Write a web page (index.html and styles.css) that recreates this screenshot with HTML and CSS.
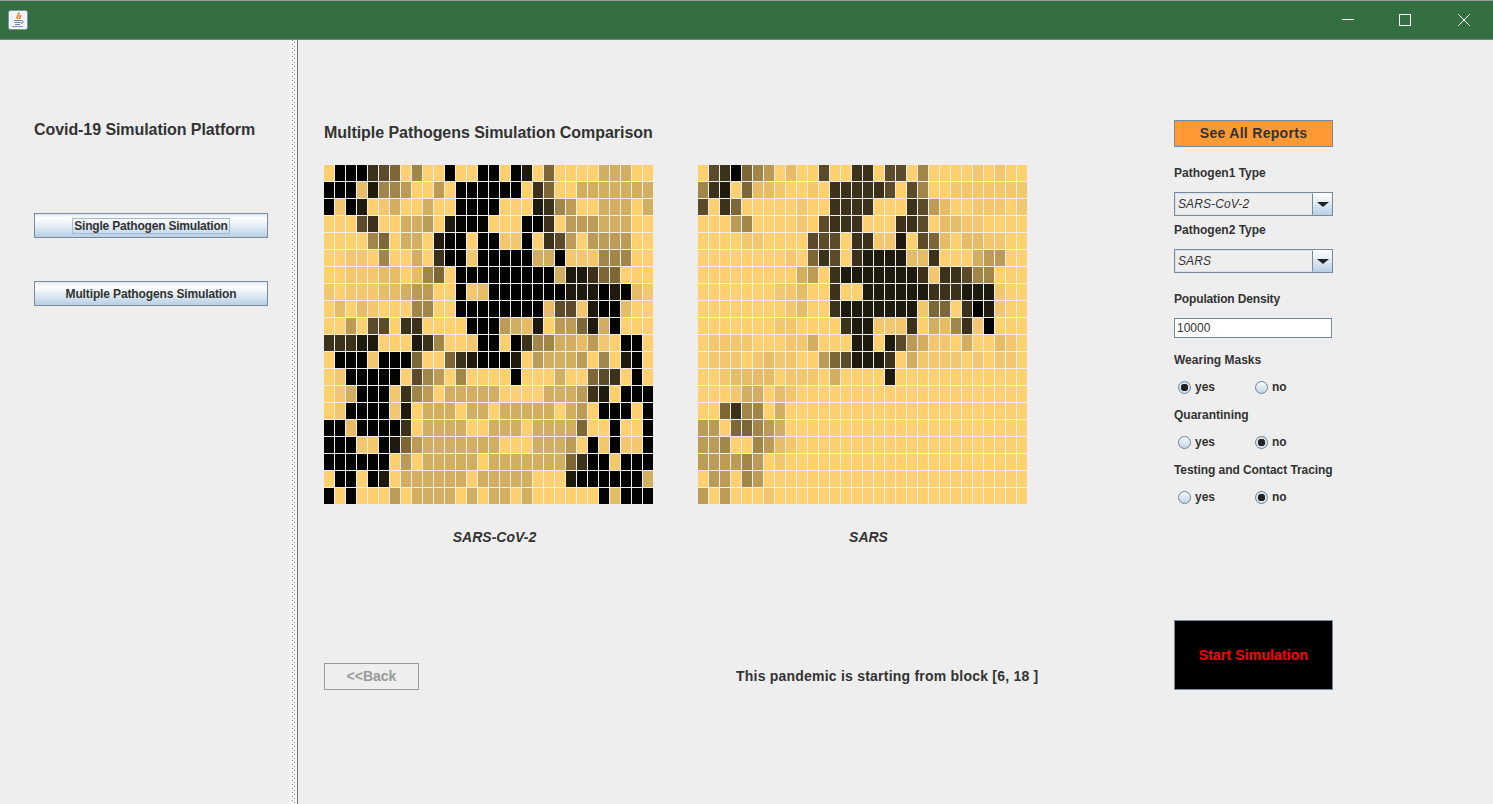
FILE: index.html
```html
<!DOCTYPE html>
<html lang="en">

<head>
    <meta charset="utf-8" />
    <title>Covid-19 Simulation Platform</title>
    <link rel="stylesheet" href="styles.css">
</head>

<body>
    <header class="titlebar">
        <svg class="app-icon" width="20" height="20" viewBox="0 0 20 20">
            <rect x="0.5" y="0.5" width="19" height="19" rx="2" fill="#f1f3f5" stroke="#7f93a8" />
            <path d="M10.500 2.500c1.500 2-2.500 3-1 6.500M12.500 5c.5 1.500-1.500 2-.8 4" fill="none" stroke="#ea7f2e" stroke-width="1.800" />
            <path d="M6 10.500h7.500M6.500 12.500h6.500M7 14.500h5" stroke="#6d8498" fill="none" />
            <path d="M4 16.500h11" stroke="#8298ab" fill="none" />
            <path d="M13.500 10.500c2.500 0 2 3-.5 3" stroke="#6d8498" fill="none" />
        </svg>
        <div class="window-controls">
            <span class="window-btn">
                <svg width="14" height="14" viewBox="0 0 14 14"><path d="M1 6.500h12" stroke="#fff" fill="none" /></svg>
            </span>
            <span class="window-btn">
                <svg width="14" height="14" viewBox="0 0 14 14"><rect x="0.500" y="1.500" width="11" height="11" stroke="#fff" fill="none" /></svg>
            </span>
            <span class="window-btn">
                <svg width="14" height="14" viewBox="0 0 14 14"><path d="M1 1l12 12M13 1L1 13" stroke="#fff" fill="none" /></svg>
            </span>
        </div>
    </header>

    <div class="workspace">
        <nav class="menu-pane">
            <h2 class="platform-title">Covid-19 Simulation Platform</h2>
            <button class="metal-btn single-btn"><span class="focus-ring">Single Pathogen Simulation</span></button>
            <button class="metal-btn multi-btn">Multiple Pathogens Simulation</button>
        </nav>

        <div class="split-divider"></div>

        <main class="sim-pane">
            <section class="compare">
                <h1 class="compare-title">Multiple Pathogens Simulation Comparison</h1>
                <div class="maps">
                    <figure class="map-block">
                        <div class="cell-grid" id="gridA"></div>
                        <figcaption>SARS-CoV-2</figcaption>
                    </figure>
                    <figure class="map-block">
                        <div class="cell-grid" id="gridB"></div>
                        <figcaption>SARS</figcaption>
                    </figure>
                </div>
                <div class="status-row">
                    <button class="back-btn" disabled>&lt;&lt;Back</button>
                    <p class="status-text">This pandemic is starting from block [6, 18 ]</p>
                </div>
            </section>

            <aside class="controls">
                <button class="reports-btn">See All Reports</button>

                <p class="field-label first-label">Pathogen1 Type</p>
                <div class="combo">
                    <span class="combo-value">SARS-CoV-2</span>
                    <span class="combo-arrow"></span>
                </div>

                <p class="field-label tight-label">Pathogen2 Type</p>
                <div class="combo">
                    <span class="combo-value">SARS</span>
                    <span class="combo-arrow"></span>
                </div>

                <p class="field-label density-label">Population Density</p>
                <input class="density-input" type="text" value="10000" />

                <p class="field-label masks-label">Wearing Masks</p>
                <div class="radio-row">
                    <label class="radio-item"><input type="radio" name="masks" checked /> yes</label>
                    <label class="radio-item"><input type="radio" name="masks" /> no</label>
                </div>

                <p class="field-label radio-label">Quarantining</p>
                <div class="radio-row">
                    <label class="radio-item"><input type="radio" name="quarantine" /> yes</label>
                    <label class="radio-item"><input type="radio" name="quarantine" checked /> no</label>
                </div>

                <p class="field-label radio-label tracing-label">Testing and Contact Tracing</p>
                <div class="radio-row">
                    <label class="radio-item"><input type="radio" name="tracing" /> yes</label>
                    <label class="radio-item"><input type="radio" name="tracing" checked /> no</label>
                </div>

                <button class="start-btn">Start Simulation</button>
            </aside>
        </main>
    </div>

    <script src="grid.js"></script>
</body>

</html>
```

FILE: styles.css
```css
* {
    box-sizing: border-box;
}

html,
body {
    height: 100%;
}

body {
    margin: 0;
    display: flex;
    flex-direction: column;
    overflow: hidden;
    font-family: "Liberation Sans", Arial, sans-serif;
    font-weight: 700;
    background: #eeeeee;
    color: #333333;
}

p,
h1,
h2,
figure {
    margin: 0;
}

/* window title bar */
.titlebar {
    flex: none;
    height: 40px;
    display: flex;
    align-items: center;
    justify-content: space-between;
    padding-left: 8px;
    background: #336f42;
    border-top: 1px solid #9a9a9a;
    border-bottom: 1px solid #70877a;
}

.app-icon {
    display: block;
}

.window-controls {
    display: flex;
}

.window-btn {
    width: 58px;
    height: 38px;
    display: flex;
    align-items: center;
    justify-content: center;
}

.workspace {
    flex: 1;
    display: flex;
    min-height: 0;
}

/* left menu */
.menu-pane {
    flex: none;
    width: 289px;
    padding: 80px 0 0 34px;
}

.platform-title {
    font-size: 16px;
    line-height: 20px;
    letter-spacing: -0.07px;
    white-space: nowrap;
}

.metal-btn {
    display: flex;
    align-items: center;
    justify-content: center;
    width: 234px;
    height: 25px;
    padding: 0;
    font: inherit;
    font-size: 12px;
    letter-spacing: -0.13px;
    color: #333333;
    border: 1px solid #7a8a99;
    background: linear-gradient(#dde8f3 0%, #ffffff 18%, #eaf1f8 45%, #b8cfe5 100%);
}

.single-btn {
    margin-top: 73px;
    letter-spacing: -0.2px;
}

.multi-btn {
    margin-top: 43px;
}

.focus-ring {
    border: 1px solid #a3b8cc;
    padding: 0 1px;
    line-height: 14px;
}

/* splitter with the small grip dots */
.split-divider {
    flex: none;
    width: 9px;
    border-right: 1px solid #6f7479;
    background-color: #f6f6f6;
    background-image:
        linear-gradient(#8f9498 1px, transparent 1px),
        linear-gradient(#8f9498 1px, transparent 1px);
    background-size: 1px 4px;
    background-position: 3px 0, 5px 2px;
    background-repeat: repeat-y;
}

.sim-pane {
    flex: 1;
    display: flex;
    padding-left: 26px;
}

.compare {
    flex: none;
    width: 850px;
    padding-top: 83px;
}

.compare-title {
    font-size: 16px;
    line-height: 20px;
    letter-spacing: -0.05px;
}

.maps {
    display: flex;
    gap: 45px;
    margin-top: 22px;
}

.map-block figcaption {
    margin-top: 25px;
    padding-left: 12px;
    font-size: 14px;
    line-height: 16px;
    font-style: italic;
    text-align: center;
}

.cell-grid {
    display: grid;
    grid-template-columns: repeat(30, 10px);
    grid-auto-rows: 16px;
    gap: 1px;
}

/* infection levels, light to dark */
.l0 { background: #ffd070; }
.l1 { background: #f3c76d; }
.l2 { background: #e6bc66; }
.l3 { background: #d2ae60; }
.l4 { background: #bc9b56; }
.l5 { background: #a08648; }
.l6 { background: #7d6736; }
.l7 { background: #5c4b2a; }
.l8 { background: #3c311a; }
.l9 { background: #1f1a0e; }
.la { background: #030302; }

.status-row {
    display: flex;
    align-items: center;
    margin-top: 118px;
}

.back-btn {
    width: 95px;
    height: 27px;
    padding: 0 0 2px;
    font: inherit;
    font-size: 14px;
    color: #999999;
    background: #eeeeee;
    border: 1px solid #999999;
}

.status-text {
    margin: 0 0 2px 317px;
    font-size: 14px;
    letter-spacing: 0.22px;
    white-space: nowrap;
}

/* right column */
.controls {
    flex: none;
    width: 159px;
    padding-top: 80px;
    font-size: 12px;
}

.reports-btn {
    display: block;
    width: 100%;
    height: 27px;
    padding: 0 0 2px;
    font: inherit;
    font-size: 14px;
    letter-spacing: 0.3px;
    color: #333333;
    background: #ff9933;
    border: 1px solid #7a8a99;
}

.field-label {
    line-height: 14px;
    white-space: nowrap;
}

.first-label {
    margin-top: 19px;
}

.tight-label {
    margin-top: 7px;
}

.density-label {
    margin-top: 19px;
    letter-spacing: -0.15px;
}

.masks-label {
    margin-top: 15px;
}

.radio-label {
    margin-top: 13px;
}

.tracing-label {
    letter-spacing: -0.07px;
}

.combo {
    display: flex;
    height: 24px;
    margin-top: 12px;
    border: 1px solid #7a8a99;
    font-weight: 400;
    font-style: italic;
    font-size: 12px;
    letter-spacing: 0.1px;
}

.combo-value {
    flex: 1;
    line-height: 21px;
    padding-left: 2px;
    border: 1px solid #d8e2ec;
    border-right: 1px solid #7a8a99;
}

.combo-arrow {
    flex: none;
    width: 19px;
    display: flex;
    align-items: center;
    justify-content: center;
    background: linear-gradient(#ffffff 0%, #e6eef6 40%, #b8cfe5 100%);
}

.combo-arrow::after {
    content: "";
    border-left: 6px solid transparent;
    border-right: 6px solid transparent;
    border-top: 5px solid #222222;
}

.density-input {
    display: block;
    width: 158px;
    height: 20px;
    margin-top: 12px;
    padding: 0 2px;
    font-family: inherit;
    font-weight: 400;
    font-size: 12px;
    color: #333333;
    background: #ffffff;
    border: 1px solid #7a8a99;
    border-radius: 0;
    outline: none;
}

.radio-row {
    display: flex;
    margin-top: 12px;
    padding-left: 4px;
    height: 16px;
}

.radio-item {
    width: 77px;
    display: flex;
    align-items: center;
    gap: 4px;
}

.radio-item input {
    appearance: none;
    -webkit-appearance: none;
    flex: none;
    width: 13px;
    height: 13px;
    margin: 0;
    border-radius: 50%;
    border: 1px solid #6f8296;
    background: linear-gradient(#f6f9fc, #c3d5e6);
}

.radio-item input:checked {
    background: radial-gradient(circle, #222222 0 3.5px, #d5e1ec 4px);
}

.start-btn {
    display: block;
    width: 100%;
    height: 70px;
    margin-top: 115px;
    padding: 0;
    font: inherit;
    font-size: 14px;
    letter-spacing: 0.13px;
    color: #ff0000;
    background: #000000;
    border: 1px solid #7a8a99;
}
```

FILE: grid.js
```js
// one value per block, 0 = healthy ... a = worst hit
const GRID_A = [
    "0 a a a 8 7 6 0 5 0 0 a 0 0 a a 0 a 9 0 6 0 0 0 0 3 3 3 0 0",
    "a a a 2 9 5 5 4 0 0 4 0 a a a a a a 0 8 6 0 0 3 3 3 3 3 3 3",
    "a 1 a 9 0 1 3 0 0 3 0 0 a a a a 0 0 0 9 8 5 4 0 0 3 3 3 0 3",
    "0 0 0 7 8 0 0 3 3 4 0 9 a a a 0 0 0 a a 8 0 4 4 4 3 3 3 0 0",
    "0 0 0 0 5 6 0 3 3 0 9 a a 0 a a 1 1 a 0 8 7 4 0 4 4 4 4 0 0",
    "0 0 1 1 0 5 0 0 3 0 8 a a 1 a a a a a 3 3 a 1 1 1 5 5 5 0 0",
    "0 0 1 1 1 2 2 0 2 5 6 0 a a a a a a a a a 3 9 9 8 6 6 0 0 0",
    "1 0 1 1 1 2 2 3 4 4 0 0 a 1 2 a a a a a a a 9 9 9 a 9 a 2 1",
    "0 2 0 2 1 0 0 0 5 5 0 0 a a a a a a a a 2 7 7 1 9 a a 2 0 0",
    "0 0 4 0 7 7 0 8 8 0 0 0 0 a a a 4 3 2 9 0 4 4 6 9 3 a 0 0 0",
    "8 8 8 9 9 0 0 0 9 8 5 0 0 1 a a 0 a 8 5 5 3 3 2 4 1 0 a a 0",
    "0 a a a 1 a a a 6 0 0 6 8 9 a a a 9 0 4 3 3 3 4 0 5 0 9 a 0",
    "0 1 a a a a a 0 7 5 4 0 5 0 0 0 0 a 0 0 0 3 0 0 6 7 8 0 a 0",
    "0 1 3 a a a 1 8 5 4 0 3 3 3 3 3 0 0 0 0 3 3 3 4 8 9 0 a a a",
    "0 1 a a a a 1 9 0 3 3 3 0 3 3 0 3 3 3 3 3 0 3 4 0 a a a 0 a",
    "a a 2 a a a a 8 0 3 3 3 3 0 0 3 3 3 0 3 3 3 3 6 0 0 a 0 0 a",
    "a a a 1 1 a 9 6 4 3 3 3 3 3 3 3 0 0 0 3 3 3 4 0 a 1 a 1 1 a",
    "a a a a a a 0 4 0 3 3 3 3 3 0 3 3 3 3 3 3 3 6 8 a a 1 a a a",
    "0 a a 0 a 9 0 3 3 3 3 3 3 0 3 3 3 3 3 0 0 0 9 a a a a a a 3",
    "a 0 a 0 0 0 4 0 3 3 3 3 0 3 0 3 3 0 3 0 0 0 0 0 0 a 2 a a a"
];

const GRID_B = [
    "0 7 8 a 6 5 4 0 2 0 0 7 0 0 8 8 0 7 7 0 5 0 0 0 0 1 0 1 0 0",
    "5 8 9 0 6 2 2 1 0 0 1 0 8 8 8 8 8 7 0 7 5 0 0 1 1 1 1 1 1 1",
    "7 0 8 6 0 0 0 0 0 1 0 0 8 8 8 8 0 0 0 8 7 4 2 0 0 1 1 1 0 1",
    "0 0 0 4 5 0 0 0 0 1 0 7 8 8 8 0 0 0 8 8 7 0 2 2 1 1 0 0 0 0",
    "0 0 0 0 1 1 0 0 0 0 7 7 7 0 8 8 1 1 9 0 7 6 2 0 2 2 1 1 0 0",
    "0 0 0 0 0 0 0 0 1 0 6 8 7 0 8 9 9 9 9 2 2 8 0 0 0 3 4 4 0 0",
    "0 0 0 0 0 0 0 0 0 3 4 0 8 9 9 9 9 9 9 9 8 1 8 8 7 5 5 0 0 0",
    "0 0 0 0 0 0 0 1 1 2 0 0 8 0 0 9 9 9 9 9 9 8 8 8 9 9 9 1 0 0",
    "0 0 0 0 0 0 0 0 1 2 0 0 8 9 9 9 9 9 9 9 1 6 6 0 8 a 9 1 0 0",
    "0 0 0 0 0 0 0 1 1 0 0 0 0 8 9 9 1 1 1 8 0 3 2 5 8 1 a 0 0 0",
    "0 1 1 1 1 0 0 0 1 1 3 0 0 0 9 9 0 9 7 4 3 1 1 0 3 0 0 2 1 0",
    "0 1 1 1 0 1 2 1 1 0 0 4 6 7 9 9 9 8 0 3 1 1 1 1 0 1 0 1 1 0",
    "0 0 1 2 2 2 2 0 1 1 1 0 3 0 0 0 0 9 0 0 0 0 0 0 0 0 0 0 0 0",
    "0 0 0 1 3 3 0 2 1 0 0 0 0 0 0 0 0 0 0 0 0 0 0 0 0 0 0 0 0 0",
    "0 0 6 8 5 5 0 3 0 0 0 0 0 0 0 0 0 0 0 0 0 0 0 0 0 0 0 0 0 0",
    "4 4 0 6 6 5 4 3 0 0 0 0 0 0 0 0 0 0 0 0 0 0 0 0 0 0 0 0 0 0",
    "4 4 5 0 0 5 4 2 1 0 0 0 0 0 0 0 0 0 0 0 0 0 0 0 0 0 0 0 0 0",
    "4 4 4 4 5 4 0 1 0 0 0 0 0 0 0 0 0 0 0 0 0 0 0 0 0 0 0 0 0 0",
    "0 4 4 0 5 4 0 0 0 0 0 0 0 0 0 0 0 0 0 0 0 0 0 0 0 0 0 0 0 0",
    "4 0 4 0 0 0 1 0 0 0 0 0 0 0 0 0 0 0 0 0 0 0 0 0 0 0 0 0 0 0"
];

function drawGrid(id, rows) {
    const grid = document.getElementById(id);
    for (const row of rows) {
        for (const level of row.split(" ")) {
            const cell = document.createElement("div");
            cell.className = "l" + level;
            grid.appendChild(cell);
        }
    }
}

drawGrid("gridA", GRID_A);
drawGrid("gridB", GRID_B);
```
